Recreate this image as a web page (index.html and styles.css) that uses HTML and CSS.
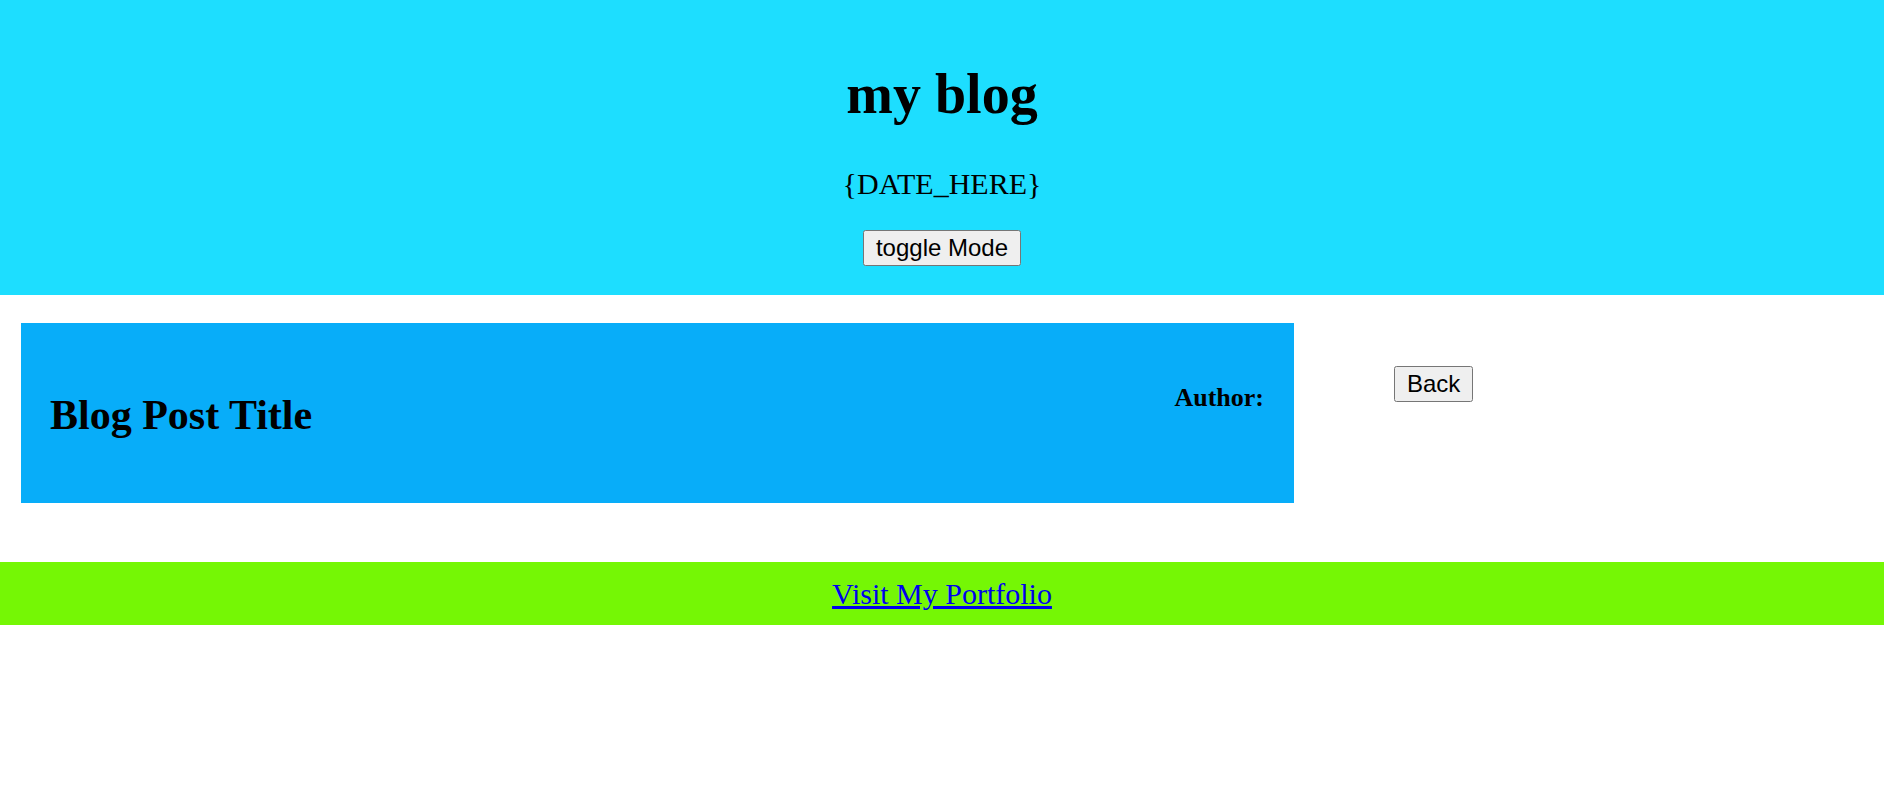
FILE: index.html
```html
<!DOCTYPE html>
<html lang="en">
<head>
<meta charset="utf-8">
<title>my blog</title>
<link rel="stylesheet" href="styles.css">
</head>
<body>
<header class="site-header">
  <h1 class="site-title">my blog</h1>
  <p class="site-date">{DATE_HERE}</p>
  <button class="btn" type="button">toggle Mode</button>
</header>
<main class="main">
  <article class="post-card">
    <h2 class="post-title">Blog Post Title</h2>
    <h3 class="post-author">Author:</h3>
  </article>
  <aside class="side">
    <button class="btn" type="button">Back</button>
  </aside>
</main>
<footer class="site-footer">
  <a class="footer-link" href="#">Visit My Portfolio</a>
</footer>
</body>
</html>
```
FILE: styles.css
```css
html, body {
  margin: 0;
  padding: 0;
  background: #ffffff;
  font-family: "Liberation Serif", "DejaVu Serif", serif;
  color: #000;
}

.site-header {
  background: #1ddeff;
  display: flex;
  flex-direction: column;
  align-items: center;
  padding: 62px 0 29px;
}

.site-title {
  margin: 0;
  font-size: 56px;
  line-height: 64px;
  font-weight: bold;
}

.site-date {
  margin: 42px 0 0;
  font-size: 30px;
  line-height: 32px;
}

.btn {
  font-family: "Liberation Sans", Arial, sans-serif;
  font-size: 24px;
  padding: 2px 11px;
  color: #000;
}

.site-header .btn {
  margin-top: 30px;
}

.main {
  display: flex;
  align-items: flex-start;
  padding: 28px 0 59px 21px;
}

.post-card {
  background: #08adf9;
  width: 1273px;
  height: 180px;
  box-sizing: border-box;
  padding: 0 30px 0 29px;
  display: flex;
  justify-content: space-between;
  align-items: flex-start;
}

.post-title {
  margin: 68px 0 0;
  font-size: 42px;
  line-height: 48px;
  font-weight: bold;
}

.post-author {
  margin: 59px 0 0;
  font-size: 26px;
  line-height: 32px;
  font-weight: bold;
}

.side {
  padding: 43px 0 0 100px;
}

.site-footer {
  background: #75f705;
  height: 63px;
  text-align: center;
  line-height: 63px;
}

.footer-link {
  font-size: 30px;
  color: #0000ee;
  text-decoration: underline;
}
```
